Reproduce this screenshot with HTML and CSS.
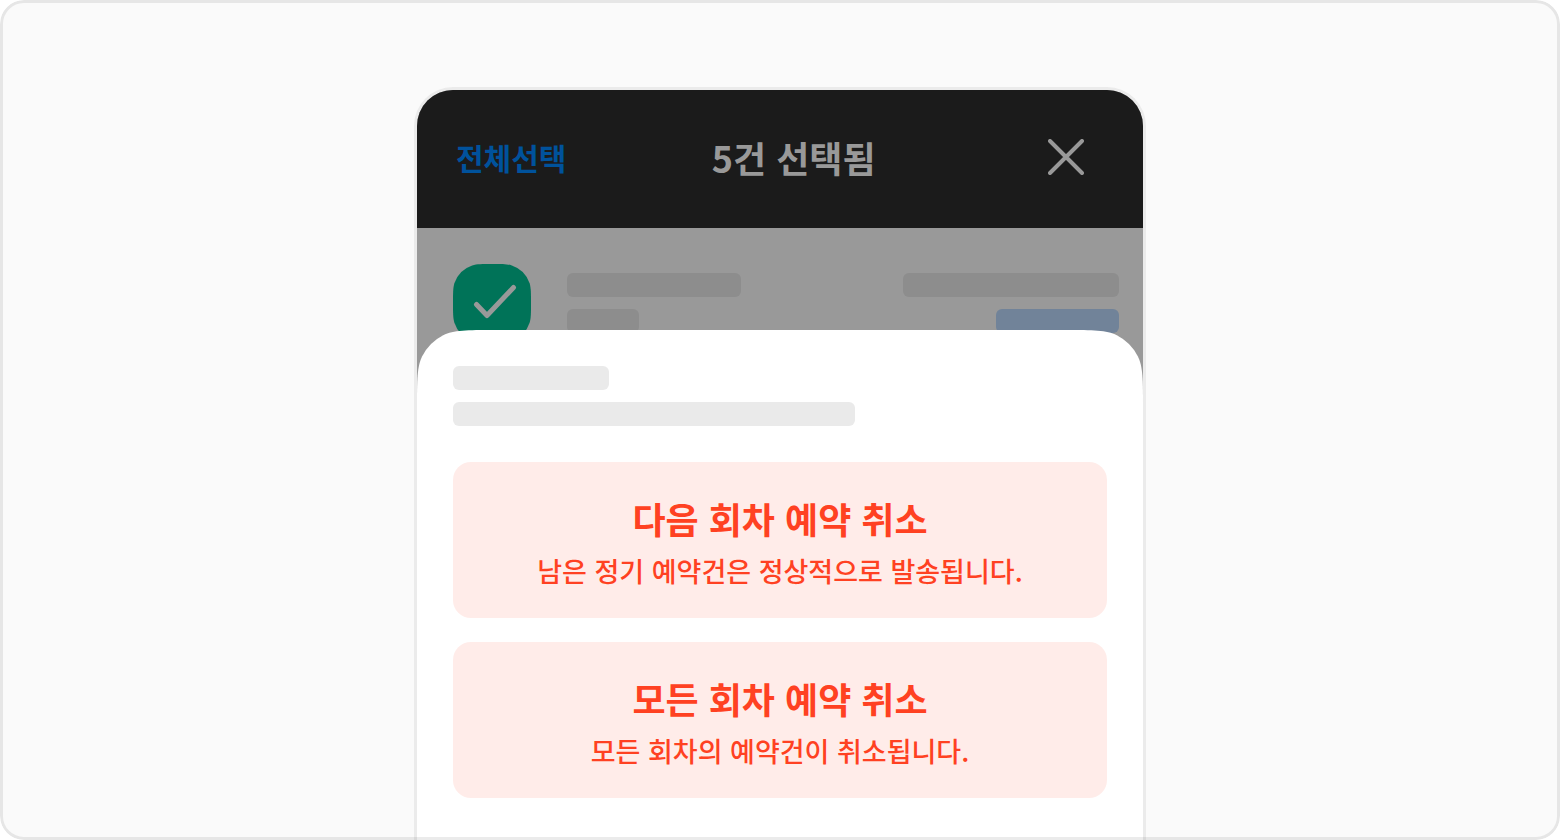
FILE: index.html
```html
<!DOCTYPE html>
<html lang="ko">
<head>
    <meta charset="UTF-8">
    <meta name="viewport" content="width=device-width, initial-scale=1.0">
    <title>예약 취소</title>
    <link rel="stylesheet" href="styles.css">
</head>
<body>
    <main class="frame">
        <div class="phone">
            <header class="header">
                <button type="button" class="select-all">전체선택</button>
                <h1>5건 선택됨</h1>
                <button type="button" class="close" aria-label="닫기">
                    <svg width="36" height="36" viewBox="0 0 36 36">
                        <path d="M2 2L34 34M34 2L2 34"/>
                    </svg>
                </button>
            </header>

            <div class="row">
                <label class="check">
                    <input type="checkbox" aria-label="예약 선택" checked>
                    <svg width="78" height="78" viewBox="0 0 78 78">
                        <path class="tile" d="M39 0C49 0 54 0 58.8 1.4A28 28 0 0 1 76.6 19.2C78 24 78 29 78 39S78 54 76.6 58.8A28 28 0 0 1 58.8 76.6C54 78 49 78 39 78S24 78 19.2 76.6A28 28 0 0 1 1.4 58.8C0 54 0 49 0 39S0 24 1.4 19.2A28 28 0 0 1 19.2 1.4C24 0 29 0 39 0Z"/>
                        <path class="tick" d="M23.5 40.5L34 51.5L60.5 23.5"/>
                    </svg>
                </label>
                <div class="bars">
                    <span class="bar bar-name"></span>
                    <span class="bar bar-count"></span>
                </div>
                <div class="bars bars-end">
                    <span class="bar bar-date"></span>
                    <span class="bar bar-status"></span>
                </div>
            </div>

            <section class="sheet">
                <!-- smooth top corners -->
                <div class="sheet-cap">
                    <svg width="77" height="77" viewBox="0 0 77 77">
                        <path d="M77 0C50 0 36.5 0 26.2 5.2A48 48 0 0 0 5.2 26.2C0 36.5 0 50 0 77H77Z"/>
                    </svg>
                    <span></span>
                    <svg width="77" height="77" viewBox="0 0 77 77">
                        <path d="M0 0C27 0 40.5 0 50.8 5.2A48 48 0 0 1 71.8 26.2C77 36.5 77 50 77 77H0Z"/>
                    </svg>
                </div>

                <div class="sheet-body">
                    <div class="sheet-text">
                        <span class="bar bar-title"></span>
                        <span class="bar bar-desc"></span>
                    </div>
                    <button type="button" class="cancel">
                        <strong>다음 회차 예약 취소</strong>
                        <span>남은 정기 예약건은 정상적으로 발송됩니다.</span>
                    </button>
                    <button type="button" class="cancel">
                        <strong>모든 회차 예약 취소</strong>
                        <span>모든 회차의 예약건이 취소됩니다.</span>
                    </button>
                </div>
            </section>
        </div>
    </main>
</body>
</html>
```
FILE: styles.css
```css
* {
    box-sizing: border-box;
}

body {
    margin: 0;
    background: #fff;
    font-family: "Noto Sans CJK KR", sans-serif;
}

button {
    margin: 0;
    padding: 0;
    border: none;
    background: none;
    font-family: inherit;
    cursor: pointer;
}

svg {
    display: block;
}

.frame {
    position: relative;
    display: flex;
    justify-content: center;
    height: 100vh;
    padding-top: 87px;
    background: #fafafa;
    border-radius: 24px;
    overflow: hidden;
}

/* border sits over the phone where it runs off the bottom */
.frame::after {
    content: "";
    position: absolute;
    inset: 0;
    border: 3px solid rgba(0, 0, 0, 0.08);
    border-radius: 24px;
    pointer-events: none;
}

.phone {
    position: relative;
    width: 100%;
    max-width: 732px;
    border: 3px solid #ebebeb;
    border-bottom: none;
    border-radius: 39px 39px 0 0;
    background: #999;
    overflow: hidden;
}

.header {
    display: flex;
    align-items: center;
    justify-content: space-between;
    height: 138px;
    padding: 0 32px 4px 39px;
    background: #1b1b1b;
}

.header h1 {
    margin: 0;
    color: #999;
    font-size: 36px;
    font-weight: 700;
    line-height: 48px;
}

.select-all {
    color: #00529c;
    font-size: 30px;
    font-weight: 700;
    line-height: 48px;
}

.close {
    display: flex;
    justify-content: center;
    width: 90px;
}

.close path {
    fill: none;
    stroke: #999;
    stroke-width: 4;
    stroke-linecap: round;
}

.row {
    display: flex;
    gap: 36px;
    padding: 36px 24px 36px 36px;
}

.check {
    position: relative;
}

.check input {
    position: absolute;
    inset: 0;
    width: 100%;
    height: 100%;
    margin: 0;
    opacity: 0;
}

.tile {
    fill: #007358;
}

.tick {
    fill: none;
    stroke: #999;
    stroke-width: 5;
    stroke-linecap: round;
    stroke-linejoin: round;
}

.bars {
    display: flex;
    flex-direction: column;
    gap: 12px;
    padding-top: 9px;
}

.bars-end {
    align-items: flex-end;
    margin-left: auto;
}

.bar {
    display: block;
    max-width: 100%;
    height: 24px;
    border-radius: 6px;
    background: #8d8d8d;
}

.bar-name { width: 174px; }
.bar-count { width: 72px; }
.bar-date { width: 216px; }

.bar-status {
    width: 123px;
    background: #718399;
}

.sheet {
    position: absolute;
    top: 240px;
    left: 0;
    right: 0;
    bottom: 0;
    background: linear-gradient(#fff, #fff) 0 77px no-repeat;
}

.sheet-cap {
    position: absolute;
    top: 0;
    left: 0;
    right: 0;
    display: flex;
}

.sheet-cap span {
    flex: 1;
    background: #fff;
}

.sheet-cap path {
    fill: #fff;
}

.sheet-body {
    position: relative;
    display: flex;
    flex-direction: column;
    gap: 24px;
    padding: 36px;
}

.sheet-text {
    display: flex;
    flex-direction: column;
    gap: 12px;
    margin-bottom: 12px;
}

.bar-title,
.bar-desc {
    background: #eaeaea;
}

.bar-title { width: 156px; }
.bar-desc { width: 402px; }

.cancel {
    display: flex;
    flex-direction: column;
    align-items: center;
    gap: 7px;
    padding: 30px 24px 27px;
    border-radius: 18px;
    background: #ffece9;
    color: #ff4122;
}

.cancel strong {
    font-size: 36px;
    font-weight: 700;
    line-height: 52px;
}

.cancel span {
    font-size: 27px;
    font-weight: 500;
    line-height: 40px;
}
```
